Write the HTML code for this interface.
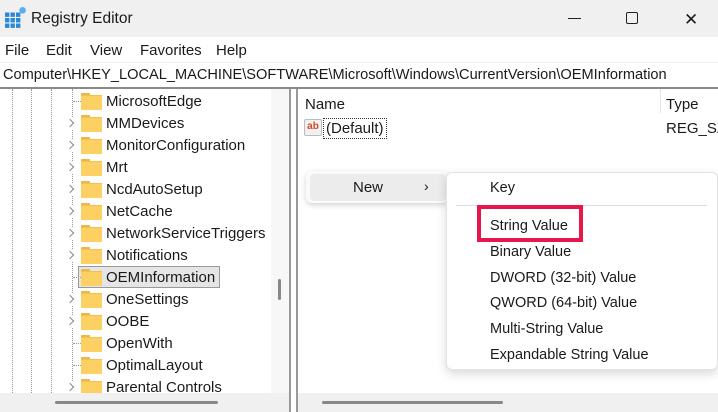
<!DOCTYPE html>
<html><head><style>
*{margin:0;padding:0;box-sizing:border-box}
body{width:718px;height:412px;overflow:hidden;background:#fff;font-family:"Liberation Sans",sans-serif;font-size:14.5px;color:#1a1a1a;position:relative}
.a{position:absolute;white-space:nowrap}
.folder{position:absolute;width:21px;height:16px}
.folder:before{content:"";position:absolute;left:0;top:0;width:9px;height:4px;background:#e8b84a;border-radius:1px 1px 0 0}
.folder:after{content:"";position:absolute;left:0;top:2px;width:21px;height:14px;background:#fcd062;border-top:1px solid #f5c04b}
.chev{position:absolute;left:67px;width:6px;height:6px;border-right:1.5px solid #888;border-top:1.5px solid #888;transform:rotate(45deg)}
.dv{position:absolute;border-left:1px dotted #999}
.dh{position:absolute;width:8px;border-top:1px dotted #999}
.mi{position:absolute;left:490px;font-size:14.5px}
</style></head><body>
<div class="a" style="left:0;top:0;width:718px;height:37px;background:#f0f0f0"></div>
<svg class="a" style="left:5px;top:7px" width="22" height="22" viewBox="0 0 20 20"><g fill="#2b8ad6"><rect x="0" y="5" width="4" height="4"/><rect x="5" y="5" width="4" height="4"/><rect x="0" y="10" width="4" height="4"/><rect x="5" y="10" width="4" height="4"/><rect x="10" y="10" width="4" height="4"/><rect x="0" y="15" width="4" height="4"/><rect x="5" y="15" width="4" height="4"/><rect x="10" y="15" width="4" height="4"/><rect x="10" y="5" width="4" height="4"/></g><circle cx="16" cy="3" r="3" fill="#5aaef0"/></svg>
<div class="a" style="left:31px;top:10px;font-size:15.5px">Registry Editor</div>
<div class="a" style="left:568px;top:18px;width:13px;border-top:1px solid #222"></div>
<div class="a" style="left:626px;top:12px;width:12px;height:12px;border:1px solid #222;border-radius:2px"></div>
<div class="a" style="left:684px;top:10px;font-size:17px">✕</div>
<div class="a" style="left:5px;top:42px;font-size:15px">File</div>
<div class="a" style="left:46px;top:42px;font-size:15px">Edit</div>
<div class="a" style="left:90px;top:42px;font-size:15px">View</div>
<div class="a" style="left:140px;top:42px;font-size:15px">Favorites</div>
<div class="a" style="left:216px;top:42px;font-size:15px">Help</div>
<div class="a" style="left:0;top:62px;width:718px;height:1px;background:#eee"></div>
<div class="a" style="left:3px;top:67px;font-size:14.6px">Computer\HKEY_LOCAL_MACHINE\SOFTWARE\Microsoft\Windows\CurrentVersion\OEMInformation</div>
<div class="a" style="left:0;top:87px;width:718px;height:2px;background:#8a8a8a"></div>
<div class="dv" style="left:12px;top:89px;height:304px"></div>
<div class="dv" style="left:31px;top:89px;height:304px"></div>
<div class="dv" style="left:51px;top:89px;height:304px"></div>
<div class="dv" style="left:72px;top:89px;height:304px"></div>
<div class="a" style="left:271px;top:89px;width:18px;height:304px;background:#f7f7f7"></div>
<div class="a" style="left:278px;top:279px;width:3px;height:21px;background:#888;border-radius:2px"></div>
<div class="a" style="left:289px;top:89px;width:2px;height:323px;background:#999"></div>
<div class="a" style="left:296px;top:89px;width:2px;height:323px;background:#999"></div>
<div id="tree"></div>
<div class="a" style="left:0;top:393px;width:289px;height:19px;background:#f0f0f0"></div>
<div class="a" style="left:55px;top:401px;width:163px;height:3px;background:#888;border-radius:2px"></div>
<div class="a" style="left:305px;top:96px;font-size:15px">Name</div>
<div class="a" style="left:660px;top:89px;width:1px;height:24px;background:#e5e5e5"></div>
<div class="a" style="left:666px;top:96px;font-size:15px">Type</div>
<div class="a" style="left:304px;top:119px;width:18px;height:17px;background:#f1f1f1;border:1px solid #bbb;border-radius:2px;font-size:10px;font-weight:bold;color:#d04a2a;line-height:14px;text-align:center">ab</div>
<div class="a" style="left:323px;top:118px;padding:1px 2px;border:1px dotted #333;font-size:15px">(Default)</div>
<div class="a" style="left:666px;top:120px;font-size:15px">REG_SZ</div>
<div class="a" style="left:298px;top:393px;width:420px;height:19px;background:#f0f0f0"></div>
<div class="a" style="left:322px;top:401px;width:181px;height:3px;background:#888;border-radius:2px"></div>
<div class="a" style="left:306px;top:171px;width:142px;height:32px;background:#fafafa;border-radius:6px;box-shadow:0 2px 6px rgba(0,0,0,.18)"></div>
<div class="a" style="left:310px;top:174px;width:136px;height:27px;background:#ececec;border-radius:4px"></div>
<div class="a" style="left:353px;top:179px;font-size:15px">New</div>
<div class="a" style="left:424px;top:178px;font-size:14px">›</div>
<div class="a" style="left:446px;top:172px;width:272px;height:198px;background:#fff;border:1px solid #e3e3e3;border-radius:6px;box-shadow:0 4px 10px rgba(0,0,0,.15)"></div>
<div class="mi" style="top:180px">Key</div>
<div class="a" style="left:456px;top:205px;width:251px;height:1px;background:#ddd"></div>
<div class="a" style="left:477px;top:205px;width:106px;height:37px;border:4px solid #e8174b"></div>
<div class="mi" style="top:218px">String Value</div>
<div class="mi" style="top:244px">Binary Value</div>
<div class="mi" style="top:270px">DWORD (32-bit) Value</div>
<div class="mi" style="top:295px">QWORD (64-bit) Value</div>
<div class="mi" style="top:321px">Multi-String Value</div>
<div class="mi" style="top:347px">Expandable String Value</div>
<script>
var n=["MicrosoftEdge","MMDevices","MonitorConfiguration","Mrt","NcdAutoSetup","NetCache","NetworkServiceTriggers","Notifications","OEMInformation","OneSettings","OOBE","OpenWith","OptimalLayout","Parental Controls"];
var ch=[0,1,1,1,1,1,1,1,0,1,1,0,0,1];var h="";
n.forEach(function(t,i){var y=101+i*22;
if(i==8)h+='<div class="a" style="left:78px;top:'+(y-11)+'px;width:142px;height:22px;background:#e5e5e5;border:1px solid #999"></div>';
if(ch[i])h+='<div class="a" style="left:70px;top:'+(y-6)+'px;width:12px;height:12px;background:#fff"></div><div class="chev" style="top:'+(y-3)+'px"></div>';
else h+='<div class="dh" style="left:73px;top:'+y+'px"></div>';
h+='<div class="folder" style="left:81px;top:'+(y-8)+'px"></div><div class="a" style="left:106px;top:'+(y-8)+'px;font-size:15px">'+t+'</div>';});
document.getElementById("tree").innerHTML=h;
</script>
</body></html>
